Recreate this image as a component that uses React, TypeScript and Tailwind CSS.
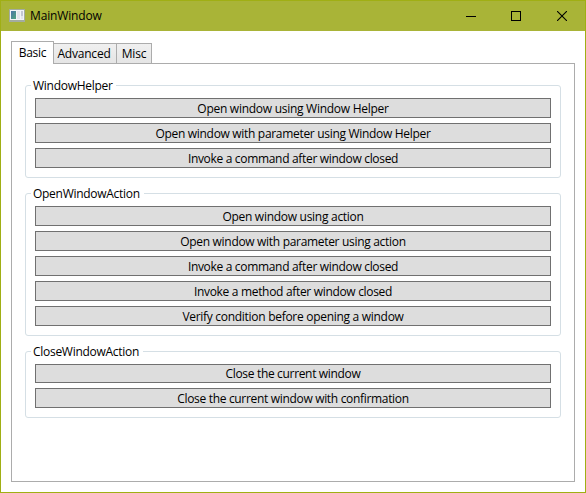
import React from "react";

type ActionItem = { label: string; tracking: string; height?: string };

function ActionButton({ label, tracking, height = "h-5 pt-0.5" }: ActionItem) {
  return (
    <button
      className={`flex w-full shrink-0 items-center justify-center border border-[#707070] bg-[#dddddd] leading-[16px] whitespace-nowrap ${height} ${tracking}`}
    >
      <span>{label}</span>
    </button>
  );
}

function GroupBox({
  title,
  legendWidth,
  items,
  className,
}: {
  title: string;
  legendWidth: string;
  items: ActionItem[];
  className: string;
}) {
  return (
    <section className={`rounded-[3px] border border-[#d5dfe5] px-[9px] ${className}`}>
      <div className="-ml-1 flex h-3 items-start">
        <h2
          className={`-mt-2 h-4 shrink-0 bg-white pl-0.5 leading-[16px] tracking-[-0.28px] whitespace-nowrap ${legendWidth}`}
        >
          {title}
        </h2>
      </div>
      <div className="flex flex-col gap-[5px]">
        {items.map((item) => (
          <ActionButton key={item.label} {...item} />
        ))}
      </div>
    </section>
  );
}

const helperItems: ActionItem[] = [
  { label: "Open window using Window Helper", tracking: "tracking-[-0.27px]" },
  { label: "Open window with parameter using Window Helper", tracking: "tracking-[-0.31px]" },
  { label: "Invoke a command after window closed", tracking: "tracking-[-0.32px]" },
];

const openItems: ActionItem[] = [
  { label: "Open window using action", tracking: "tracking-[-0.28px]" },
  { label: "Open window with parameter using action", tracking: "tracking-[-0.31px]" },
  { label: "Invoke a command after window closed", tracking: "tracking-[-0.32px]" },
  { label: "Invoke a method after window closed", tracking: "tracking-[-0.32px]" },
  { label: "Verify condition before opening a window", tracking: "tracking-[-0.29px]" },
];

const closeItems: ActionItem[] = [
  { label: "Close the current window", tracking: "tracking-[-0.33px]", height: "h-[19px] pt-px" },
  { label: "Close the current window with confirmation", tracking: "tracking-[-0.32px]" },
];

function AppIcon() {
  return (
    <svg width="16" height="14" viewBox="0 0 16 14" shapeRendering="crispEdges">
      <defs>
        <linearGradient id="pane" x1="0" y1="0" x2="1" y2="1">
          <stop offset="0" stopColor="#4a74a8" />
          <stop offset="1" stopColor="#4fa67c" />
        </linearGradient>
      </defs>
      <rect x="0" y="0" width="16" height="13" fill="#a3aca0" />
      <rect x="1" y="1" width="14" height="10" fill="#f2f4f6" />
      <rect x="2" y="2" width="5" height="8" fill="url(#pane)" />
      <rect x="8" y="2" width="3" height="8" fill="#e2e4ea" />
      <rect x="12" y="2" width="2" height="5" fill="#c3c8d2" />
      <rect x="12" y="7" width="2" height="3" fill="#e3e6ea" />
    </svg>
  );
}

function TitleBar() {
  return (
    <header className="flex h-[30px] shrink-0 items-center bg-[#a9b437] pl-2">
      <AppIcon />
      <h1 className="ml-[5px] leading-[16px] tracking-[-0.15px]">MainWindow</h1>
      <div className="ml-auto flex h-full items-center">
        <button aria-label="Minimize" className="flex h-full w-[45px] items-center justify-center pr-px">
          <svg width="10" height="10" viewBox="0 0 10 10" shapeRendering="crispEdges">
            <path d="M0 5.5H10" stroke="#000" />
          </svg>
        </button>
        <button aria-label="Maximize" className="flex h-full w-[45px] items-center justify-center pr-px">
          <svg width="10" height="10" viewBox="0 0 10 10" shapeRendering="crispEdges">
            <rect x="0.5" y="0.5" width="9" height="9" fill="none" stroke="#000" />
          </svg>
        </button>
        <button aria-label="Close" className="flex h-full w-[46px] items-center justify-center">
          <svg width="10" height="10" viewBox="0 0 10 10">
            <path d="M0 0L10 10M10 0L0 10" stroke="#000" strokeWidth="1.1" />
          </svg>
        </button>
      </div>
    </header>
  );
}

export default function App() {
  return (
    <div className="flex h-[493px] w-[586px] flex-col border border-[#a0af14] bg-white font-['Open_Sans','Noto_Sans',sans-serif] text-[12px] text-black">
      <TitleBar />
      <main className="flex flex-1 flex-col px-2.5 pt-2.5 pb-2.5">
        <nav className="z-10 -mb-px flex h-[23px] items-end">
          <button className="flex h-[23px] w-[43px] items-center justify-center border border-b-0 border-[#acacac] bg-white leading-[16px] tracking-[-0.3px]">
            Basic
          </button>
          <button className="flex h-[21px] w-[63px] items-center justify-center border border-l-0 border-[#acacac] bg-linear-to-b from-[#f0f0f0] to-[#e5e5e5] pt-px pr-0.5 leading-[16px] tracking-[-0.2px]">
            Advanced
          </button>
          <button className="flex h-[21px] w-[35px] items-center justify-center border border-l-0 border-[#acacac] bg-linear-to-b from-[#f0f0f0] to-[#e5e5e5] pt-px leading-[16px] tracking-[-0.15px]">
            Misc
          </button>
        </nav>
        <div className="flex flex-1 flex-col gap-[15px] border border-[#acacac] px-[13px] pt-[21px]">
          <GroupBox title="WindowHelper" legendWidth="w-[85px]" items={helperItems} className="h-[93px]" />
          <GroupBox title="OpenWindowAction" legendWidth="w-[113px]" items={openItems} className="h-[143px]" />
          <GroupBox title="CloseWindowAction" legendWidth="w-[112px]" items={closeItems} className="h-[67px]" />
        </div>
      </main>
    </div>
  );
}
